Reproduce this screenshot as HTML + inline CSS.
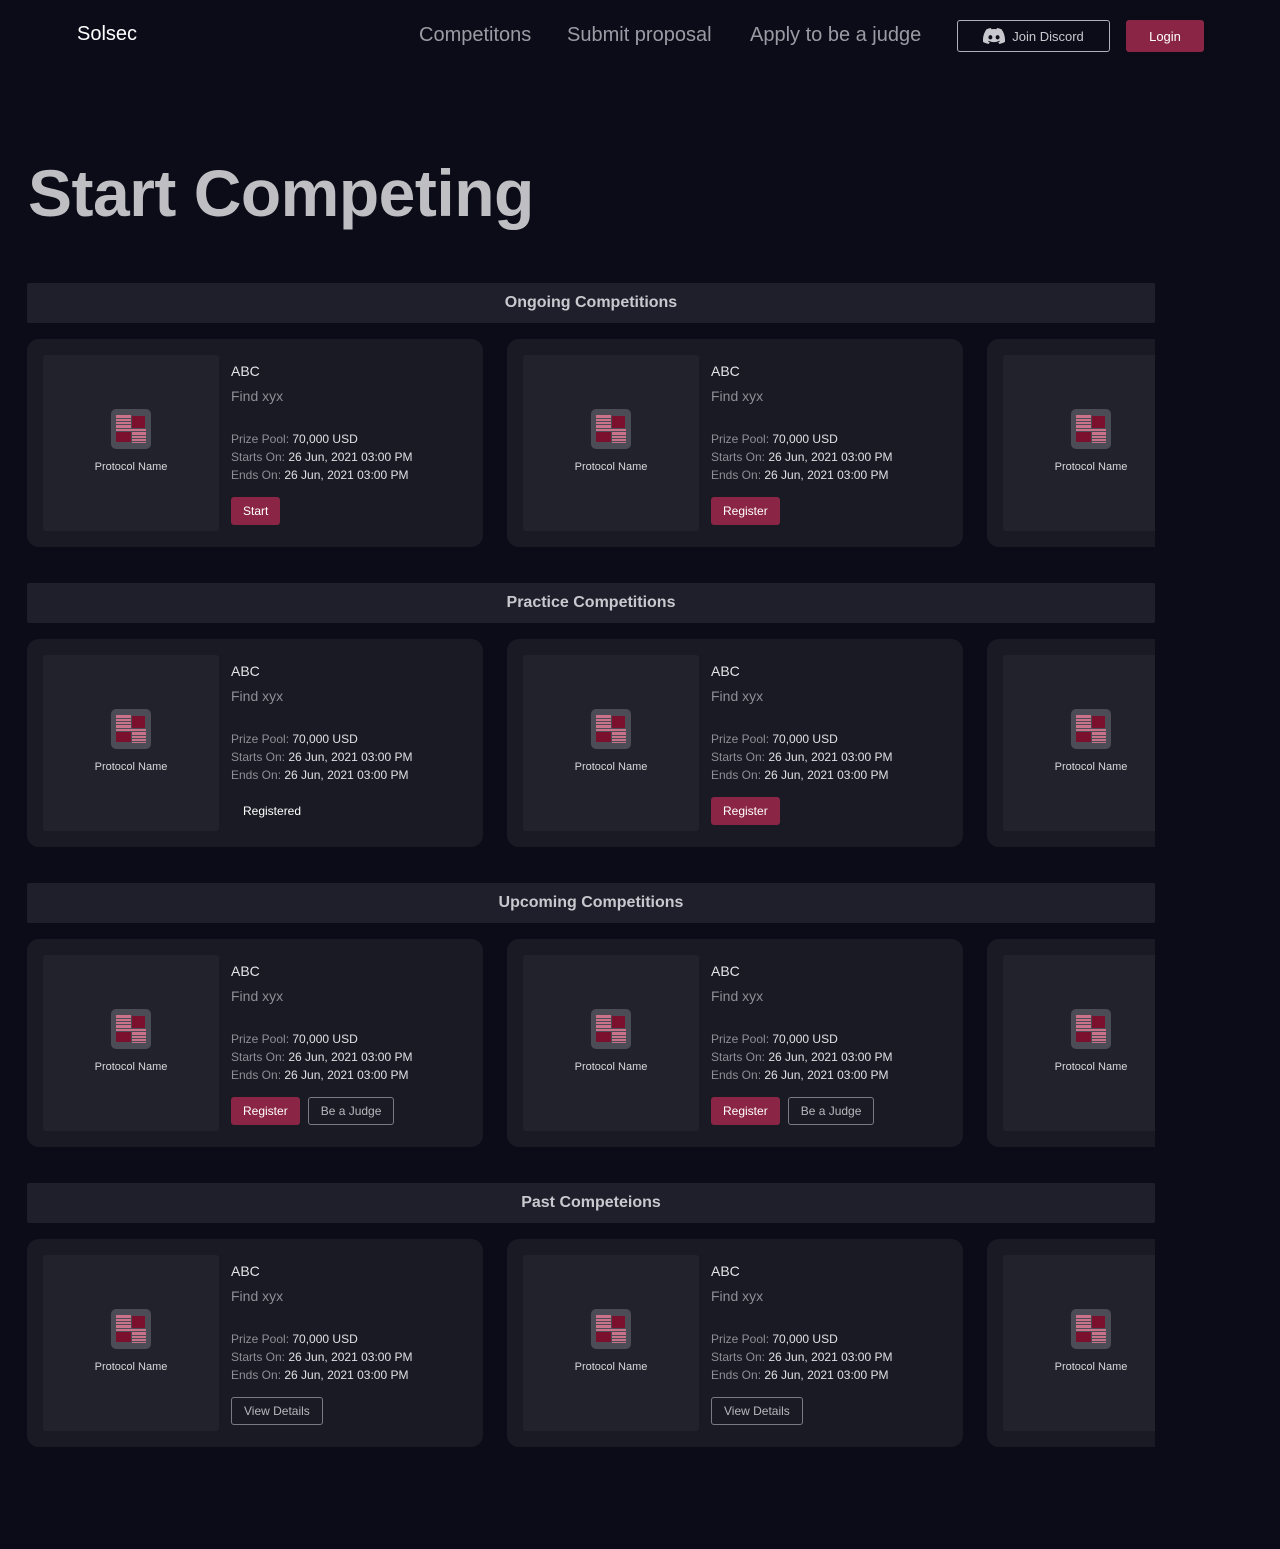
<!DOCTYPE html>
<html><head><meta charset="utf-8"><style>
*{box-sizing:border-box;margin:0;padding:0}
body{width:1280px;height:1549px;background:#0c0c18;font-family:"Liberation Sans",sans-serif;color:#ddd;position:relative;overflow:hidden}
.logo{position:absolute;left:77px;top:23px;font-size:20px;color:#fff}
.nav{position:absolute;top:24px;font-size:20px;color:#9b9ba3}
.btn-d{position:absolute;left:957px;top:20px;width:153px;height:32px;border:1px solid #b0b0b8;border-radius:3px;color:#c8c8ce;font-size:13px;display:flex;align-items:center;justify-content:center;gap:7px}
.btn-l{position:absolute;left:1126px;top:20px;width:78px;height:32px;background:#8a2546;border-radius:3px;color:#fff;font-size:13px;display:flex;align-items:center;justify-content:center}
h1{position:absolute;left:28px;top:155px;font-size:66px;font-weight:bold;color:#bfbfc3;letter-spacing:-0.5px}
.sec{position:absolute;left:27px;width:1128px;overflow:hidden}
.bar{height:40px;background:#1f1f2b;border-radius:2px;text-align:center;line-height:40px;font-size:16px;font-weight:bold;color:#c8c8ce}
.row{display:flex;gap:24px;margin-top:16px;width:1500px}
.card{width:456px;height:208px;background:#1a1a24;border-radius:12px;padding:16px;display:flex;flex-shrink:0}
.box{width:176px;height:176px;background:#22222c;border-radius:3px;display:flex;flex-direction:column;align-items:center;justify-content:center;flex-shrink:0;padding-bottom:4px}
.ic{width:40px;height:40px;background:#4c4c56;border-radius:5px;position:relative}
.pn{font-size:11px;color:#d8d8dc;margin-top:12px}
.tx{margin-left:12px;padding-top:8px}
.t1{font-size:14px;color:#e4e4e8;height:25px}
.t2{font-size:14px;color:#8e8e96;height:42px}
.l{font-size:12px;color:#e0e0e4;line-height:18px}
.l span{color:#8e8e96}
.bt{display:inline-flex;align-items:center;justify-content:center;height:28px;padding:0 12px;font-size:12px;border-radius:3px;margin-top:13px;margin-right:8px}
.m{background:#8a2546;color:#fff}
.o{border:1px solid #7a7a82;color:#b8b8be}
.p{color:#fff}
</style></head><body>
<div class="logo">Solsec</div>
<div class="nav" style="left:419px">Competitons</div>
<div class="nav" style="left:567px">Submit proposal</div>
<div class="nav" style="left:750px">Apply to be a judge</div>
<div class="btn-d"><svg width="22" height="16" viewBox="0 0 22 16"><path fill="#c8c8ce" d="M18.6 1.4A18 18 0 0 0 14 0l-.6 1.2a17 17 0 0 0-5 0L7.9 0A18 18 0 0 0 3.4 1.4C.5 5.7-.3 9.900.1 14a18 18 0 0 0 5.5 2l1.2-1.9a12 12 0 0 1-1.9-.9l.5-.4a13 13 0 0 0 11.2 0l.5.4a12 12 0 0 1-1.9.9l1.2 1.9a18 18 0 0 0 5.5-2c.5-4.8-.8-9-3.3-12.6zM7.4 11.5c-1.1 0-2-1-2-2.2s.9-2.2 2-2.2 2 1 2 2.2-.9 2.2-2 2.2zm7.2 0c-1.1 0-2-1-2-2.2s.9-2.2 2-2.2 2 1 2 2.2-.9 2.2-2 2.2z"/></svg>Join Discord</div>
<div class="btn-l">Login</div>
<h1>Start Competing</h1>

<svg width="0" height="0" style="position:absolute"><defs><symbol id="ic" viewBox="0 0 30 30"><rect x="0" y="1" width="15" height="13" fill="#c9728a"/><g fill="#4c4c56"><rect x="0" y="4" width="15" height="1"/><rect x="0" y="7" width="15" height="1"/><rect x="0" y="10" width="15" height="1"/></g><rect x="16" y="2" width="13" height="12" fill="#7a0f2e"/><rect x="0" y="15" width="30" height="2" fill="#c9728a"/><rect x="0" y="18" width="15" height="10" fill="#7a0f2e"/><rect x="16" y="18" width="14" height="11" fill="#c9728a"/><g fill="#4c4c56"><rect x="16" y="21" width="14" height="1"/><rect x="16" y="24" width="14" height="1"/><rect x="16" y="27" width="14" height="1"/></g></symbol></defs></svg>

<div class="sec" style="top:283px"><div class="bar">Ongoing Competitions</div><div class="row">
<div class="card"><div class="box"><div class="ic"><svg style="position:absolute;left:5px;top:5px" width="30" height="30"><use href="#ic"/></svg></div><div class="pn">Protocol Name</div></div><div class="tx"><div class="t1">ABC</div><div class="t2">Find xyx</div><div class="l"><span>Prize Pool:</span> 70,000 USD</div><div class="l"><span>Starts On:</span> 26 Jun, 2021 03:00 PM</div><div class="l"><span>Ends On:</span> 26 Jun, 2021 03:00 PM</div><div class="bt m">Start</div></div></div>
<div class="card"><div class="box"><div class="ic"><svg style="position:absolute;left:5px;top:5px" width="30" height="30"><use href="#ic"/></svg></div><div class="pn">Protocol Name</div></div><div class="tx"><div class="t1">ABC</div><div class="t2">Find xyx</div><div class="l"><span>Prize Pool:</span> 70,000 USD</div><div class="l"><span>Starts On:</span> 26 Jun, 2021 03:00 PM</div><div class="l"><span>Ends On:</span> 26 Jun, 2021 03:00 PM</div><div class="bt m">Register</div></div></div>
<div class="card"><div class="box"><div class="ic"><svg style="position:absolute;left:5px;top:5px" width="30" height="30"><use href="#ic"/></svg></div><div class="pn">Protocol Name</div></div></div>
</div></div>

<div class="sec" style="top:583px"><div class="bar">Practice Competitions</div><div class="row">
<div class="card"><div class="box"><div class="ic"><svg style="position:absolute;left:5px;top:5px" width="30" height="30"><use href="#ic"/></svg></div><div class="pn">Protocol Name</div></div><div class="tx"><div class="t1">ABC</div><div class="t2">Find xyx</div><div class="l"><span>Prize Pool:</span> 70,000 USD</div><div class="l"><span>Starts On:</span> 26 Jun, 2021 03:00 PM</div><div class="l"><span>Ends On:</span> 26 Jun, 2021 03:00 PM</div><div class="bt p">Registered</div></div></div>
<div class="card"><div class="box"><div class="ic"><svg style="position:absolute;left:5px;top:5px" width="30" height="30"><use href="#ic"/></svg></div><div class="pn">Protocol Name</div></div><div class="tx"><div class="t1">ABC</div><div class="t2">Find xyx</div><div class="l"><span>Prize Pool:</span> 70,000 USD</div><div class="l"><span>Starts On:</span> 26 Jun, 2021 03:00 PM</div><div class="l"><span>Ends On:</span> 26 Jun, 2021 03:00 PM</div><div class="bt m">Register</div></div></div>
<div class="card"><div class="box"><div class="ic"><svg style="position:absolute;left:5px;top:5px" width="30" height="30"><use href="#ic"/></svg></div><div class="pn">Protocol Name</div></div></div>
</div></div>

<div class="sec" style="top:883px"><div class="bar">Upcoming Competitions</div><div class="row">
<div class="card"><div class="box"><div class="ic"><svg style="position:absolute;left:5px;top:5px" width="30" height="30"><use href="#ic"/></svg></div><div class="pn">Protocol Name</div></div><div class="tx"><div class="t1">ABC</div><div class="t2">Find xyx</div><div class="l"><span>Prize Pool:</span> 70,000 USD</div><div class="l"><span>Starts On:</span> 26 Jun, 2021 03:00 PM</div><div class="l"><span>Ends On:</span> 26 Jun, 2021 03:00 PM</div><div class="bt m">Register</div><div class="bt o">Be a Judge</div></div></div>
<div class="card"><div class="box"><div class="ic"><svg style="position:absolute;left:5px;top:5px" width="30" height="30"><use href="#ic"/></svg></div><div class="pn">Protocol Name</div></div><div class="tx"><div class="t1">ABC</div><div class="t2">Find xyx</div><div class="l"><span>Prize Pool:</span> 70,000 USD</div><div class="l"><span>Starts On:</span> 26 Jun, 2021 03:00 PM</div><div class="l"><span>Ends On:</span> 26 Jun, 2021 03:00 PM</div><div class="bt m">Register</div><div class="bt o">Be a Judge</div></div></div>
<div class="card"><div class="box"><div class="ic"><svg style="position:absolute;left:5px;top:5px" width="30" height="30"><use href="#ic"/></svg></div><div class="pn">Protocol Name</div></div></div>
</div></div>

<div class="sec" style="top:1183px"><div class="bar">Past Competeions</div><div class="row">
<div class="card"><div class="box"><div class="ic"><svg style="position:absolute;left:5px;top:5px" width="30" height="30"><use href="#ic"/></svg></div><div class="pn">Protocol Name</div></div><div class="tx"><div class="t1">ABC</div><div class="t2">Find xyx</div><div class="l"><span>Prize Pool:</span> 70,000 USD</div><div class="l"><span>Starts On:</span> 26 Jun, 2021 03:00 PM</div><div class="l"><span>Ends On:</span> 26 Jun, 2021 03:00 PM</div><div class="bt o">View Details</div></div></div>
<div class="card"><div class="box"><div class="ic"><svg style="position:absolute;left:5px;top:5px" width="30" height="30"><use href="#ic"/></svg></div><div class="pn">Protocol Name</div></div><div class="tx"><div class="t1">ABC</div><div class="t2">Find xyx</div><div class="l"><span>Prize Pool:</span> 70,000 USD</div><div class="l"><span>Starts On:</span> 26 Jun, 2021 03:00 PM</div><div class="l"><span>Ends On:</span> 26 Jun, 2021 03:00 PM</div><div class="bt o">View Details</div></div></div>
<div class="card"><div class="box"><div class="ic"><svg style="position:absolute;left:5px;top:5px" width="30" height="30"><use href="#ic"/></svg></div><div class="pn">Protocol Name</div></div></div>
</div></div>
</body></html>
